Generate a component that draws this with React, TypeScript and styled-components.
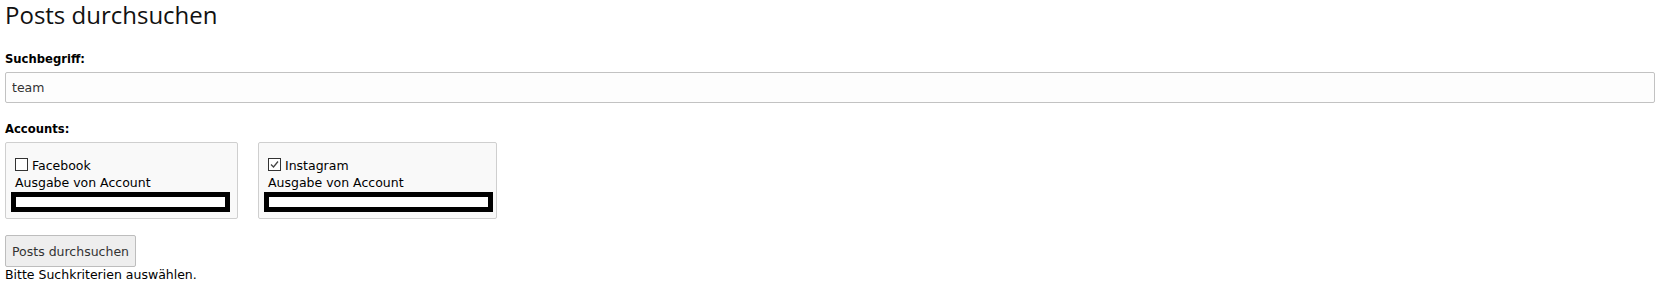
import React from 'react';
import styled, { createGlobalStyle } from 'styled-components';

const GlobalStyle = createGlobalStyle`
  html, body {
    margin: 0;
    padding: 0;
    background: #fff;
  }
  body {
    font-family: "DejaVu Sans", Verdana, sans-serif;
    font-size: 12.5px;
    color: #000;
  }
`;

const Page = styled.div`
  padding: 0 5px;
  display: flex;
  flex-direction: column;
  align-items: flex-start;
`;

const Title = styled.h1`
  margin: 0;
  font-family: "Open Sans", "Noto Sans", sans-serif;
  font-size: 24px;
  font-weight: 400;
  line-height: 30px;
  color: #111;
`;

const FieldLabel = styled.label<{ $top: number }>`
  display: block;
  margin-top: ${(p) => p.$top}px;
  margin-bottom: 6px;
  font-size: 11.6px;
  font-weight: 700;
  line-height: 14px;
`;

const SearchInput = styled.input`
  box-sizing: border-box;
  width: 100%;
  height: 31px;
  margin: 0;
  padding: 0 6px;
  border: 1px solid #c2c2c2;
  border-radius: 2px;
  background: #fdfdfd;
  font-family: "DejaVu Sans", Verdana, sans-serif;
  font-size: 12.5px;
  color: #333;
  outline: none;
`;

const AccountList = styled.div`
  display: flex;
  gap: 20px;
`;

const AccountCard = styled.div<{ $width: number }>`
  box-sizing: border-box;
  width: ${(p) => p.$width}px;
  height: 77px;
  padding: 14px 0 6px 5px;
  border: 1px solid #cfcfcf;
  border-radius: 2px;
  background: #f9f9f9;
`;

const CheckRow = styled.label`
  display: flex;
  align-items: center;
  gap: 4px;
  margin-left: 4px;
  height: 17px;
  line-height: 17px;
`;

const Box = styled.span`
  box-sizing: border-box;
  width: 13px;
  height: 13px;
  border: 1px solid #333;
  background: #fff;
  display: flex;
  align-items: center;
  justify-content: center;
  margin-top: -2px;
`;

const Output = styled.div`
  margin-left: 4px;
  height: 17px;
  line-height: 17px;
`;

const Redacted = styled.div<{ $width: number }>`
  box-sizing: border-box;
  width: ${(p) => p.$width}px;
  height: 20px;
  margin-top: 1px;
  border: 5px solid #000;
  background: #fff;
`;

const SubmitButton = styled.button`
  margin-top: 16px;
  height: 32px;
  padding: 0 6px;
  border: 1px solid #bdbdbd;
  border-radius: 2px;
  background: #eeeeee;
  font-family: "DejaVu Sans", Verdana, sans-serif;
  font-size: 12.5px;
  color: #333;
  cursor: pointer;
`;

const Hint = styled.div`
  line-height: 17px;
  margin-top: -1px;
`;

const Checkbox: React.FC<{ checked?: boolean }> = ({ checked }) => (
  <Box>
    {checked && (
      <svg width="11" height="11" viewBox="0 0 11 11">
        <path d="M2 5.5 L4.5 8 L9 2.5" fill="none" stroke="#444" strokeWidth="1.3" />
      </svg>
    )}
  </Box>
);

const accounts = [
  { name: 'Facebook', checked: false, width: 233, barWidth: 219 },
  { name: 'Instagram', checked: true, width: 239, barWidth: 229 },
];

export default function App() {
  return (
    <>
      <GlobalStyle />
      <Page>
        <Title>Posts durchsuchen</Title>
        <FieldLabel $top={22}>Suchbegriff:</FieldLabel>
        <SearchInput defaultValue="team" />
        <FieldLabel $top={19}>Accounts:</FieldLabel>
        <AccountList>
          {accounts.map((a) => (
            <AccountCard key={a.name} $width={a.width}>
              <CheckRow>
                <Checkbox checked={a.checked} />
                {a.name}
              </CheckRow>
              <Output>Ausgabe von Account</Output>
              <Redacted $width={a.barWidth} />
            </AccountCard>
          ))}
        </AccountList>
        <SubmitButton>Posts durchsuchen</SubmitButton>
        <Hint>Bitte Suchkriterien auswählen.</Hint>
      </Page>
    </>
  );
}
